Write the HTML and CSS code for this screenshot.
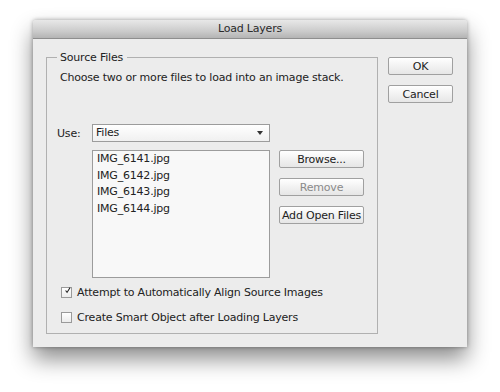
FILE: index.html
```html
<!DOCTYPE html>
<html>
<head>
    <title>Load Layers</title>
    <link rel="stylesheet" href="styles.css">
</head>
<body>
    <div class="window">
        <div class="titlebar">Load Layers</div>
        <div class="window-body">
            <fieldset class="group">
                <legend>Source Files</legend>
                <p class="description">Choose two or more files to load into an image stack.</p>

                <div class="use-row">
                    <span class="use-label">Use:</span>
                    <div class="select">
                        <span>Files</span>
                        <span class="arrow"></span>
                    </div>
                </div>

                <div class="files-row">
                    <ul class="file-list">
                        <li>IMG_6141.jpg</li>
                        <li>IMG_6142.jpg</li>
                        <li>IMG_6143.jpg</li>
                        <li>IMG_6144.jpg</li>
                    </ul>
                    <div class="file-buttons">
                        <button class="btn">Browse...</button>
                        <button class="btn" disabled>Remove</button>
                        <button class="btn">Add Open Files</button>
                    </div>
                </div>

                <label class="check">
                    <span class="box">
                        <svg width="11" height="11" viewBox="0 0 11 11"><path d="M2.5 5.5 L4.8 8.5 L9.5 1" fill="none" stroke="#222" stroke-width="1.6"/></svg>
                    </span>
                    Attempt to Automatically Align Source Images
                </label>
                <label class="check">
                    <span class="box"></span>
                    Create Smart Object after Loading Layers
                </label>
            </fieldset>

            <div class="dialog-buttons">
                <button class="btn">OK</button>
                <button class="btn">Cancel</button>
            </div>
        </div>
    </div>
</body>
</html>
```

FILE: styles.css
```css
body {
    margin: 0;
    min-height: 392px;
    box-sizing: border-box;
    padding: 20px 0 0 33px;
    background: #ffffff;
    font-family: 'DejaVu Sans', sans-serif;
    font-size: 11px;
    letter-spacing: -0.2px;
    color: #222;
}

.window {
    width: 434px;
    height: 327px;
    background: #ececec;
    box-shadow: 0 12px 22px rgba(0,0,0,0.45), 0 0 4px rgba(0,0,0,0.35);
    border-radius: 3px 3px 0 0;
}

.titlebar {
    height: 18px;
    line-height: 18px;
    text-align: center;
    font-size: 11px;
    color: #2a2a2a;
    background: linear-gradient(#e8e8e8, #cccccc 60%, #b4b4b4);
    border-bottom: 1px solid #8e8e8e;
    border-radius: 3px 3px 0 0;
}

.window-body {
    display: flex;
    padding: 12px 0 0 13px;
}

.group {
    box-sizing: border-box;
    width: 332px;
    height: 283px;
    margin: 0;
    padding: 0 10px 0 11px;
    border: 1px solid #b0b0b0;
    border-radius: 0;
}

.group legend {
    padding: 0 4px 0 3px;
    margin-left: -1px;
    line-height: 13px;
}

.description {
    margin: 7px 0 0 2px;
    line-height: 13px;
}

.use-row {
    display: flex;
    align-items: center;
    margin-top: 40px;
}

.use-label {
    width: 35px;
    margin-left: -1px;
}

.select {
    width: 172px;
    height: 16px;
    line-height: 16px;
    padding: 0 1px 0 3px;
    border: 1px solid #9c9c9c;
    background: linear-gradient(#ffffff, #f0f0f0);
    display: flex;
    justify-content: space-between;
    align-items: center;
}

.arrow {
    width: 0;
    height: 0;
    margin-right: 5px;
    border-left: 3px solid transparent;
    border-right: 3px solid transparent;
    border-top: 4px solid #333;
}

.files-row {
    display: flex;
    margin: 8px 0 0 34px;
}

.file-list {
    list-style: none;
    margin: 0;
    padding: 0 4px;
    width: 168px;
    height: 126px;
    background: #f8f8f8;
    border: 1px solid #9c9c9c;
}

.file-list li {
    line-height: 16.7px;
}

.file-buttons {
    display: flex;
    flex-direction: column;
    gap: 10px;
    margin-left: 9px;
    margin-top: 0;
}

.btn {
    font-family: 'DejaVu Sans', sans-serif;
    font-size: 11px;
    letter-spacing: -0.2px;
    color: #222;
    width: 85px;
    height: 18px;
    padding: 0;
    border: 1px solid #a0a0a0;
    border-radius: 2px;
    background: linear-gradient(#ffffff, #f2f2f2 50%, #e6e6e6);
}

.btn:disabled {
    color: #8a8a8a;
}

.check {
    display: flex;
    align-items: center;
    margin: 6px 0 0 3px;
    height: 16px;
}

.check + .check {
    margin-top: 9px;
}

.box {
    width: 11px;
    height: 11px;
    margin-right: 5px;
    border: 1px solid #9a9a9a;
    background: linear-gradient(#ffffff, #ececec);
    display: flex;
    align-items: center;
    justify-content: center;
    box-sizing: border-box;
}

.box svg {
    margin-top: -3px;
    margin-left: 2px;
}

.dialog-buttons {
    display: flex;
    flex-direction: column;
    gap: 10px;
    margin: 6px 0 0 10px;
}

.dialog-buttons .btn {
    width: 65px;
}
```
